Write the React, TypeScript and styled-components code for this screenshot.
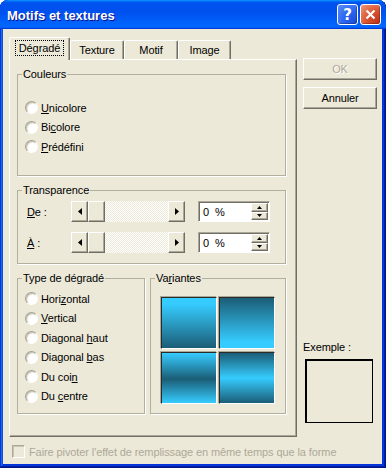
import React from 'react'
import styled, { createGlobalStyle, css } from 'styled-components'

const GlobalStyle = createGlobalStyle`
  html, body {
    margin: 0;
    padding: 0;
    background: #fff;
  }
  body {
    font-family: "Liberation Sans", Arial, sans-serif;
    font-size: 11px;
    letter-spacing: -0.1px;
    color: #000;
  }
`

const raised = css`
  box-sizing: border-box;
  border: 1px solid;
  border-color: #fff #716f64 #716f64 #fff;
  box-shadow: inset -1px -1px #aca899;
  background: #ece9d8;
`

const sunken = css`
  box-sizing: border-box;
  border: 1px solid;
  border-color: #aca899 #fff #fff #aca899;
  box-shadow: inset 1px 1px #716f64;
`

const Frame = styled.div`
  width: 386px;
  height: 468px;
  box-sizing: border-box;
  display: flex;
  flex-direction: column;
  background: #0831d9;
  box-shadow: inset -1px -1px #00138c, inset 1px 1px #0831d9, inset -2px -2px #001ea0,
    inset 2px 2px #166aee, inset -3px -3px #003bda, inset 3px 3px #0855dd;
  border-radius: 8px 8px 0 0;
  overflow: hidden;
`

const TitleBar = styled.div`
  height: 29px;
  flex-shrink: 0;
  display: flex;
  align-items: center;
  padding: 0 5px 0 7px;
  background: linear-gradient(
    180deg,
    #0997ff,
    #0053ee 8%,
    #0050ee 40%,
    #06f 88%,
    #06f 93%,
    #005bff 95%,
    #003dd7 96%,
    #003dd7
  );
  border-radius: 8px 8px 0 0;
`

const Title = styled.div`
  flex: 1;
  color: #fff;
  font-weight: bold;
  font-size: 13px;
  letter-spacing: 0;
  text-shadow: 1px 1px #0f1089;
  padding-top: 1px;
`

const CaptionButtons = styled.div`
  display: flex;
  gap: 2px;
`

const CaptionButton = styled.div<{ $kind: 'help' | 'close' }>`
  width: 21px;
  height: 21px;
  box-sizing: border-box;
  border: 1px solid #fff;
  border-radius: 3px;
  display: flex;
  align-items: center;
  justify-content: center;
  color: #fff;
  font: bold 15px 'DejaVu Sans', sans-serif;
  background: ${p =>
    p.$kind === 'help'
      ? 'radial-gradient(circle at 90% 90%, #1d4fd8 0, #2a64f0 45%, #5b8ef8 100%)'
      : 'radial-gradient(circle at 90% 90%, #c0341a 0, #d9502c 45%, #f09878 100%)'};
  box-shadow: inset -1px -1px rgba(0, 0, 0, 0.25);
`

const Client = styled.div`
  flex: 1;
  margin: 0 4px 4px 3px;
  background: #ece9d8;
  display: flex;
  flex-direction: column;
  padding: 8px 5px 0 6px;
`

const Main = styled.div`
  display: flex;
  gap: 6px;
`

const TabArea = styled.div`
  width: 288px;
  display: flex;
  flex-direction: column;
`

const TabStrip = styled.div`
  display: flex;
  align-items: flex-end;
  height: 22px;
`

const Tab = styled.div<{ $active?: boolean; $w: number }>`
  width: ${p => p.$w}px;
  height: ${p => (p.$active ? 23 : 19)}px;
  margin-bottom: ${p => (p.$active ? -1 : 0)}px;
  box-sizing: border-box;
  border: 1px solid;
  border-bottom: none;
  border-color: #fff #716f64 transparent #fff;
  border-radius: 2px 2px 0 0;
  box-shadow: inset -1px 0 #aca899;
  background: #ece9d8;
  display: flex;
  align-items: center;
  justify-content: center;
  padding-bottom: ${p => (p.$active ? 2 : 0)}px;
  position: relative;
  z-index: ${p => (p.$active ? 1 : 0)};
`

const FocusText = styled.span`
  outline: 1px dotted #000;
  outline-offset: 0;
  padding: 1px 3px;
`

const Panel = styled.div`
  height: 378px;
  box-sizing: border-box;
  border: 1px solid;
  border-color: #fff #716f64 #716f64 #fff;
  box-shadow: inset -1px -1px #aca899;
  padding: 8px 10px 0 7px;
  display: flex;
  flex-direction: column;
  gap: 8px;
`

const Group = styled.fieldset<{ $h: number; $w?: number }>`
  margin: 0;
  min-width: 0;
  box-sizing: border-box;
  height: ${p => p.$h}px;
  ${p => (p.$w ? `width: ${p.$w}px;` : '')}
  padding: 0 4px;
  border: 1px solid #b2af9f;
  box-shadow: 1px 1px #fff;
`

const Legend = styled.legend`
  padding: 0 1px;
  line-height: 13px;
`

const RadioList = styled.div<{ $top: number }>`
  display: flex;
  flex-direction: column;
  padding: ${p => p.$top}px 0 0 3px;
`

const RadioRow = styled.div`
  height: 19.5px;
  display: flex;
  align-items: center;
  gap: 3px;
`

const RadioDot = styled.span`
  width: 13px;
  height: 13px;
  box-sizing: border-box;
  border-radius: 50%;
  border: 1px solid;
  border-color: #a5a293 #fff #fff #a5a293;
  background: radial-gradient(circle at 65% 65%, #fff 45%, #e4e2d8 90%);
  box-shadow: inset 1px 1px 1px #c4c1b2;
`

const SliderRows = styled.div`
  display: flex;
  flex-direction: column;
  gap: 10px;
  padding: 4px 0 0 5px;
`

const SliderRow = styled.div`
  display: flex;
  align-items: center;
  height: 21px;
`

const RowLabel = styled.span`
  width: 44px;
`

const ScrollBar = styled.div`
  width: 114px;
  height: 21px;
  display: flex;
  margin-right: 13px;
`

const ScrollButton = styled.div`
  ${raised}
  width: 17px;
  height: 100%;
  display: flex;
  align-items: center;
  justify-content: center;
`

const Track = styled.div`
  flex: 1;
  background: repeating-conic-gradient(#fff 0 25%, #ece9d8 0 50%) 0 0 / 2px 2px;
`

const SpinBox = styled.div`
  ${sunken}
  width: 72px;
  height: 21px;
  display: flex;
  background: #fff;
  padding: 1px 1px 1px 2px;
`

const SpinValue = styled.div`
  flex: 1;
  display: flex;
  align-items: center;
  padding-left: 2px;
  word-spacing: 3px;
`

const SpinButtons = styled.div`
  width: 17px;
  display: flex;
  flex-direction: column;
`

const SpinButton = styled.div`
  ${raised}
  flex: 1;
  display: flex;
  align-items: center;
  justify-content: center;
`

const BottomRow = styled.div`
  display: flex;
  gap: 5px;
`

const SwatchGrid = styled.div`
  display: grid;
  grid-template-columns: 56px 56px;
  grid-auto-rows: 52px;
  gap: 3px 2px;
  justify-content: center;
  padding-top: 12px;
`

const Swatch = styled.div<{ $fill: string }>`
  box-sizing: border-box;
  border: 1px solid;
  border-color: #2a2a26 #fff #fff #2a2a26;
  box-shadow: -1px -1px #aca899;
  background: ${p => p.$fill};
`

const Side = styled.div`
  width: 74px;
  display: flex;
  flex-direction: column;
  gap: 7px;
  padding: 21px 0 14px;
`

const Button = styled.div<{ $disabled?: boolean }>`
  ${raised}
  height: 22px;
  display: flex;
  align-items: center;
  justify-content: center;
  color: ${p => (p.$disabled ? '#aca899' : '#000')};
  ${p => (p.$disabled ? 'text-shadow: 1px 1px #fff;' : '')}
`

const Example = styled.div`
  margin-top: auto;
  display: flex;
  flex-direction: column;
  gap: 5px;
`

const ExampleLabel = styled.span`
  line-height: 13px;
`

const ExampleBox = styled.div`
  width: 68px;
  height: 64px;
  box-sizing: border-box;
  margin-left: 2px;
  border: 1px solid #000;
  box-shadow: inset 1px 1px #000;
`

const Footer = styled.div`
  display: flex;
  align-items: center;
  gap: 4px;
  padding: 8px 0 0 3px;
  color: #aca899;
`

const CheckBox = styled.span`
  width: 13px;
  height: 13px;
  box-sizing: border-box;
  border: 1px solid;
  border-color: #aca899 #fff #fff #aca899;
  box-shadow: inset 1px 1px #c9c6b8;
`

const LIGHT = '#36ccff'
const DARK = '#1b5d76'

const variants = [
  `linear-gradient(${LIGHT} 12%, ${DARK} 100%)`,
  `linear-gradient(${DARK} 0%, ${LIGHT} 88%)`,
  `linear-gradient(${LIGHT} 0%, ${DARK} 52%, ${LIGHT} 100%)`,
  `linear-gradient(${DARK} 0%, ${LIGHT} 50%, ${DARK} 100%)`,
]

const ArrowLeft = () => (
  <svg width="4" height="7" viewBox="0 0 4 7">
    <path d="M4 0V7L0 3.5Z" fill="#000" />
  </svg>
)

const ArrowRight = () => (
  <svg width="4" height="7" viewBox="0 0 4 7">
    <path d="M0 0V7L4 3.5Z" fill="#000" />
  </svg>
)

const ArrowUp = () => (
  <svg width="5" height="3" viewBox="0 0 5 3">
    <path d="M0 3H5L2.5 0Z" fill="#000" />
  </svg>
)

const ArrowDown = () => (
  <svg width="5" height="3" viewBox="0 0 5 3">
    <path d="M0 0H5L2.5 3Z" fill="#000" />
  </svg>
)

const Radio = ({ children }: { children: React.ReactNode }) => (
  <RadioRow>
    <RadioDot />
    <span>{children}</span>
  </RadioRow>
)

const SliderLine = ({ label }: { label: React.ReactNode }) => (
  <SliderRow>
    <RowLabel>{label}</RowLabel>
    <ScrollBar>
      <ScrollButton>
        <ArrowLeft />
      </ScrollButton>
      <ScrollButton />
      <Track />
      <ScrollButton>
        <ArrowRight />
      </ScrollButton>
    </ScrollBar>
    <SpinBox>
      <SpinValue>0 %</SpinValue>
      <SpinButtons>
        <SpinButton>
          <ArrowUp />
        </SpinButton>
        <SpinButton>
          <ArrowDown />
        </SpinButton>
      </SpinButtons>
    </SpinBox>
  </SliderRow>
)

const App: React.FC = () => {
  return (
    <>
      <GlobalStyle />
      <Frame>
        <TitleBar>
          <Title>Motifs et textures</Title>
          <CaptionButtons>
            <CaptionButton $kind="help">?</CaptionButton>
            <CaptionButton $kind="close">
              <svg width="11" height="11" viewBox="0 0 11 11">
                <path d="M1.5 1.5L9.5 9.5M9.5 1.5L1.5 9.5" stroke="#fff" strokeWidth="2.2" />
              </svg>
            </CaptionButton>
          </CaptionButtons>
        </TitleBar>
        <Client>
          <Main>
            <TabArea>
              <TabStrip>
                <Tab $active $w={61}>
                  <FocusText>Dégradé</FocusText>
                </Tab>
                <Tab $w={54}>Texture</Tab>
                <Tab $w={54}>Motif</Tab>
                <Tab $w={53}>Image</Tab>
              </TabStrip>
              <Panel>
                <Group $h={108}>
                  <Legend>Couleurs</Legend>
                  <RadioList $top={17}>
                    <Radio>
                      <u>U</u>nicolore
                    </Radio>
                    <Radio>
                      Bi<u>c</u>olore
                    </Radio>
                    <Radio>
                      <u>P</u>rédéfini
                    </Radio>
                  </RadioList>
                </Group>
                <Group $h={80}>
                  <Legend>Transparence</Legend>
                  <SliderRows>
                    <SliderLine
                      label={
                        <>
                          <u>D</u>e :
                        </>
                      }
                    />
                    <SliderLine
                      label={
                        <>
                          <u>À</u> :
                        </>
                      }
                    />
                  </SliderRows>
                </Group>
                <BottomRow>
                  <Group $h={142} $w={128}>
                    <Legend>Type de dégradé</Legend>
                    <RadioList $top={4}>
                      <Radio>
                        Hori<u>z</u>ontal
                      </Radio>
                      <Radio>
                        <u>V</u>ertical
                      </Radio>
                      <Radio>
                        Diagonal <u>h</u>aut
                      </Radio>
                      <Radio>
                        Diagonal <u>b</u>as
                      </Radio>
                      <Radio>
                        Du coi<u>n</u>
                      </Radio>
                      <Radio>
                        Du <u>c</u>entre
                      </Radio>
                    </RadioList>
                  </Group>
                  <Group $h={142} $w={136}>
                    <Legend>
                      Va<u>r</u>iantes
                    </Legend>
                    <SwatchGrid>
                      {variants.map((fill, i) => (
                        <Swatch key={i} $fill={fill} />
                      ))}
                    </SwatchGrid>
                  </Group>
                </BottomRow>
              </Panel>
            </TabArea>
            <Side>
              <Button $disabled>OK</Button>
              <Button>Annuler</Button>
              <Example>
                <ExampleLabel>Exemple :</ExampleLabel>
                <ExampleBox />
              </Example>
            </Side>
          </Main>
          <Footer>
            <CheckBox />
            <span>Faire pivoter l'effet de remplissage en même temps que la forme</span>
          </Footer>
        </Client>
      </Frame>
    </>
  )
}

export default App
